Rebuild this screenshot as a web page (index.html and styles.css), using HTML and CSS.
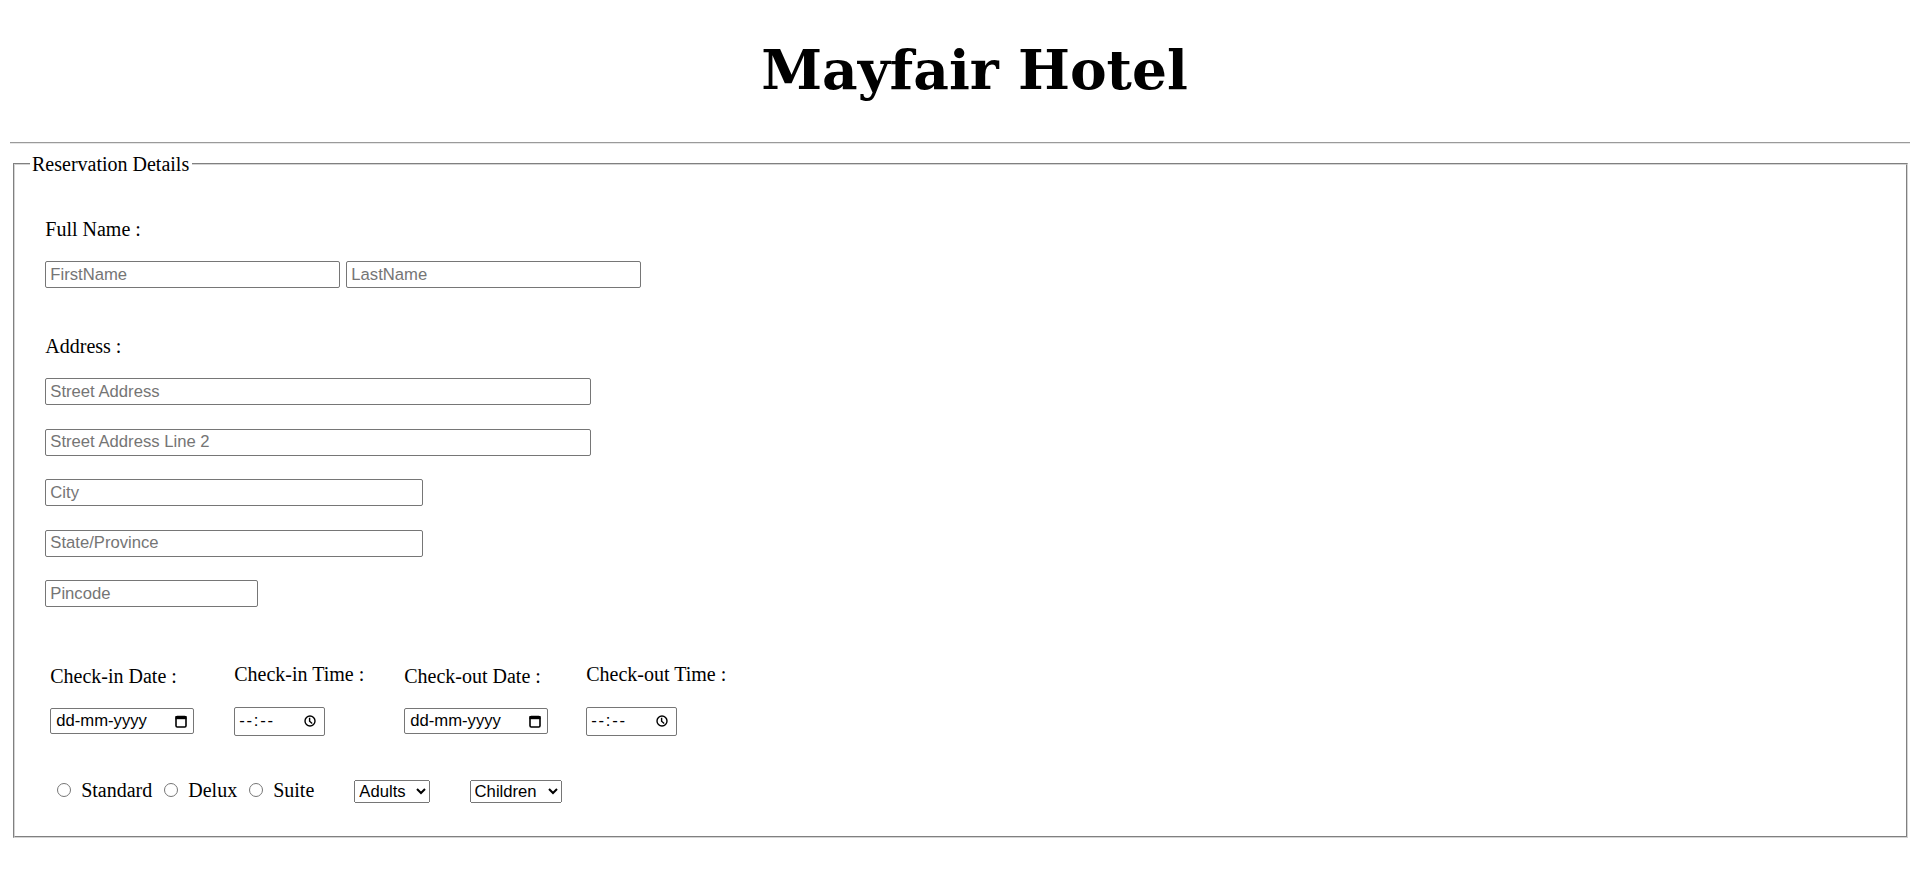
FILE: index.html
```html
<!DOCTYPE html>
<html lang="en">
<head>
<meta charset="utf-8">
<title>Mayfair Hotel</title>
<link rel="stylesheet" href="styles.css">
</head>
<body>
<h1 class="title">Mayfair Hotel</h1>
<hr class="divider">
<form class="booking">
  <fieldset class="details">
    <legend class="details-legend">Reservation Details</legend>

    <div class="group group-name">
      <p class="group-label">Full Name :</p>
      <div class="name-row">
        <input class="text-input w-name" type="text" placeholder="FirstName">
        <input class="text-input w-name" type="text" placeholder="LastName">
      </div>
    </div>

    <div class="group group-address">
      <p class="group-label">Address :</p>
      <div class="stack">
        <input class="text-input w-street" type="text" placeholder="Street Address">
        <input class="text-input w-street" type="text" placeholder="Street Address Line 2">
        <input class="text-input w-city" type="text" placeholder="City">
        <input class="text-input w-city" type="text" placeholder="State/Province">
        <input class="text-input w-pin" type="text" placeholder="Pincode">
      </div>
    </div>

    <div class="schedule">
      <div class="schedule-col">
        <span class="schedule-label">Check-in Date :</span>
        <div class="fake-input fake-date" role="textbox" aria-label="Check-in Date">
          <span class="fake-text">dd-mm-yyyy</span>
          <svg class="icon-cal" width="12" height="13" viewBox="0 0 12 13"><rect x="1" y="1.5" width="10" height="10.5" rx="1.2" fill="none" stroke="#000" stroke-width="1.6"/><rect x="0.5" y="1" width="11" height="3.2" fill="#000"/></svg>
        </div>
      </div>
      <div class="schedule-col">
        <span class="schedule-label">Check-in Time :</span>
        <div class="fake-input fake-time" role="textbox" aria-label="Check-in Time">
          <span class="fake-text fake-text--time">--:--</span>
          <svg class="icon-clock" width="12" height="12" viewBox="0 0 12 12"><circle cx="6" cy="6" r="5" fill="none" stroke="#000" stroke-width="1.4"/><path d="M5.6 2.8V6.3L8.2 8.5" fill="none" stroke="#000" stroke-width="1.4"/></svg>
        </div>
      </div>
      <div class="schedule-col">
        <span class="schedule-label">Check-out Date :</span>
        <div class="fake-input fake-date" role="textbox" aria-label="Check-out Date">
          <span class="fake-text">dd-mm-yyyy</span>
          <svg class="icon-cal" width="12" height="13" viewBox="0 0 12 13"><rect x="1" y="1.5" width="10" height="10.5" rx="1.2" fill="none" stroke="#000" stroke-width="1.6"/><rect x="0.5" y="1" width="11" height="3.2" fill="#000"/></svg>
        </div>
      </div>
      <div class="schedule-col">
        <span class="schedule-label">Check-out Time :</span>
        <div class="fake-input fake-time" role="textbox" aria-label="Check-out Time">
          <span class="fake-text fake-text--time">--:--</span>
          <svg class="icon-clock" width="12" height="12" viewBox="0 0 12 12"><circle cx="6" cy="6" r="5" fill="none" stroke="#000" stroke-width="1.4"/><path d="M5.6 2.8V6.3L8.2 8.5" fill="none" stroke="#000" stroke-width="1.4"/></svg>
        </div>
      </div>
    </div>

    <div class="room-row">
      <span class="room-options"><input class="room-radio" type="radio" name="room" id="r-standard"> <label for="r-standard">Standard</label> <input class="room-radio" type="radio" name="room" id="r-delux"> <label for="r-delux">Delux</label> <input class="room-radio" type="radio" name="room" id="r-suite"> <label for="r-suite">Suite</label></span>
      <select class="pick pick-adults">
        <option>Adults</option>
        <option>1</option>
        <option>2</option>
        <option>3</option>
      </select>
      <select class="pick pick-children">
        <option>Children</option>
        <option>0</option>
        <option>1</option>
        <option>2</option>
      </select>
    </div>
  </fieldset>
</form>
</body>
</html>
```
FILE: styles.css
```css
body {
  margin: 0;
  padding: 0 10px;
  background: #fff;
  color: #000;
  font-family: "Liberation Serif", "Times New Roman", serif;
  font-size: 20px;
}

.title {
  margin: 36.5px 0 40px;
  padding-left: 29px;
  text-align: center;
  font-family: Georgia, "DejaVu Serif", serif;
  font-size: 55px;
  font-weight: bold;
  line-height: normal;
}

.divider {
  height: 0;
  margin: 0 0 9px;
  border: none;
  border-top: 1px solid #9a9a9a;
  border-bottom: 1px solid #e6e6e6;
}

.booking {
  margin: 0;
}

.details {
  margin: 0 2.5px;
  padding: 7px 15px 12.5px;
  border: 2px groove #d4d4d4;
}

.details-legend {
  padding: 0 2.5px;
  line-height: normal;
}

.group {
  margin-left: 15.8px;
}

.group-name {
  margin-top: 35.6px;
}

.group-address {
  margin-top: 47px;
}

.group-label {
  margin: 0 0 20.2px;
  line-height: normal;
}

.name-row {
  display: flex;
  gap: 6px;
}

.stack {
  display: flex;
  flex-direction: column;
  align-items: flex-start;
  gap: 23.5px;
}

.text-input {
  box-sizing: border-box;
  height: 27px;
  margin: 0;
  padding: 0 4px;
  border: 1px solid #767676;
  border-radius: 2px;
  background: #fff;
  color: #000;
  font-family: "Liberation Sans", Arial, sans-serif;
  font-size: 16.67px;
}

.text-input::placeholder {
  color: #757575;
}

.w-name { width: 295px; }
.w-street { width: 546px; }
.w-city { width: 378px; }
.w-pin { width: 213px; }

.schedule {
  display: grid;
  grid-template-columns: 184px 170px 182px auto;
  align-items: center;
  margin: 55.7px 0 0 20.7px;
}

.schedule-col {
  display: flex;
  flex-direction: column;
  align-items: flex-start;
}

.schedule-label {
  margin-bottom: 20.5px;
  line-height: normal;
}

.fake-input {
  box-sizing: border-box;
  display: flex;
  align-items: center;
  justify-content: space-between;
  border: 1px solid #767676;
  border-radius: 2px;
  background: #fff;
  color: #000;
  font-family: "Liberation Sans", Arial, sans-serif;
  font-size: 16.67px;
}

.fake-date {
  width: 144px;
  height: 26px;
  padding: 0 6.5px 0 5px;
}

.fake-time {
  width: 90.6px;
  height: 29px;
  padding: 0 8px 0 4px;
}

.fake-text--time {
  letter-spacing: 1.75px;
}

.icon-cal,
.icon-clock {
  display: block;
  flex: none;
}

.room-row {
  display: flex;
  align-items: baseline;
  margin: 43.2px 0 20.5px 20.7px;
}

.room-options {
  white-space: nowrap;
  line-height: normal;
}

.room-radio {
  width: 14px;
  height: 14px;
  margin: 4px 5px 0 7px;
}

.pick {
  box-sizing: border-box;
  height: 23px;
  margin: 0;
  color: #000;
  font-family: "Liberation Sans", Arial, sans-serif;
  font-size: 16.67px;
}

.pick-adults {
  width: 76px;
  margin-left: 40px;
}

.pick-children {
  width: 92px;
  margin-left: 39.3px;
}
```
